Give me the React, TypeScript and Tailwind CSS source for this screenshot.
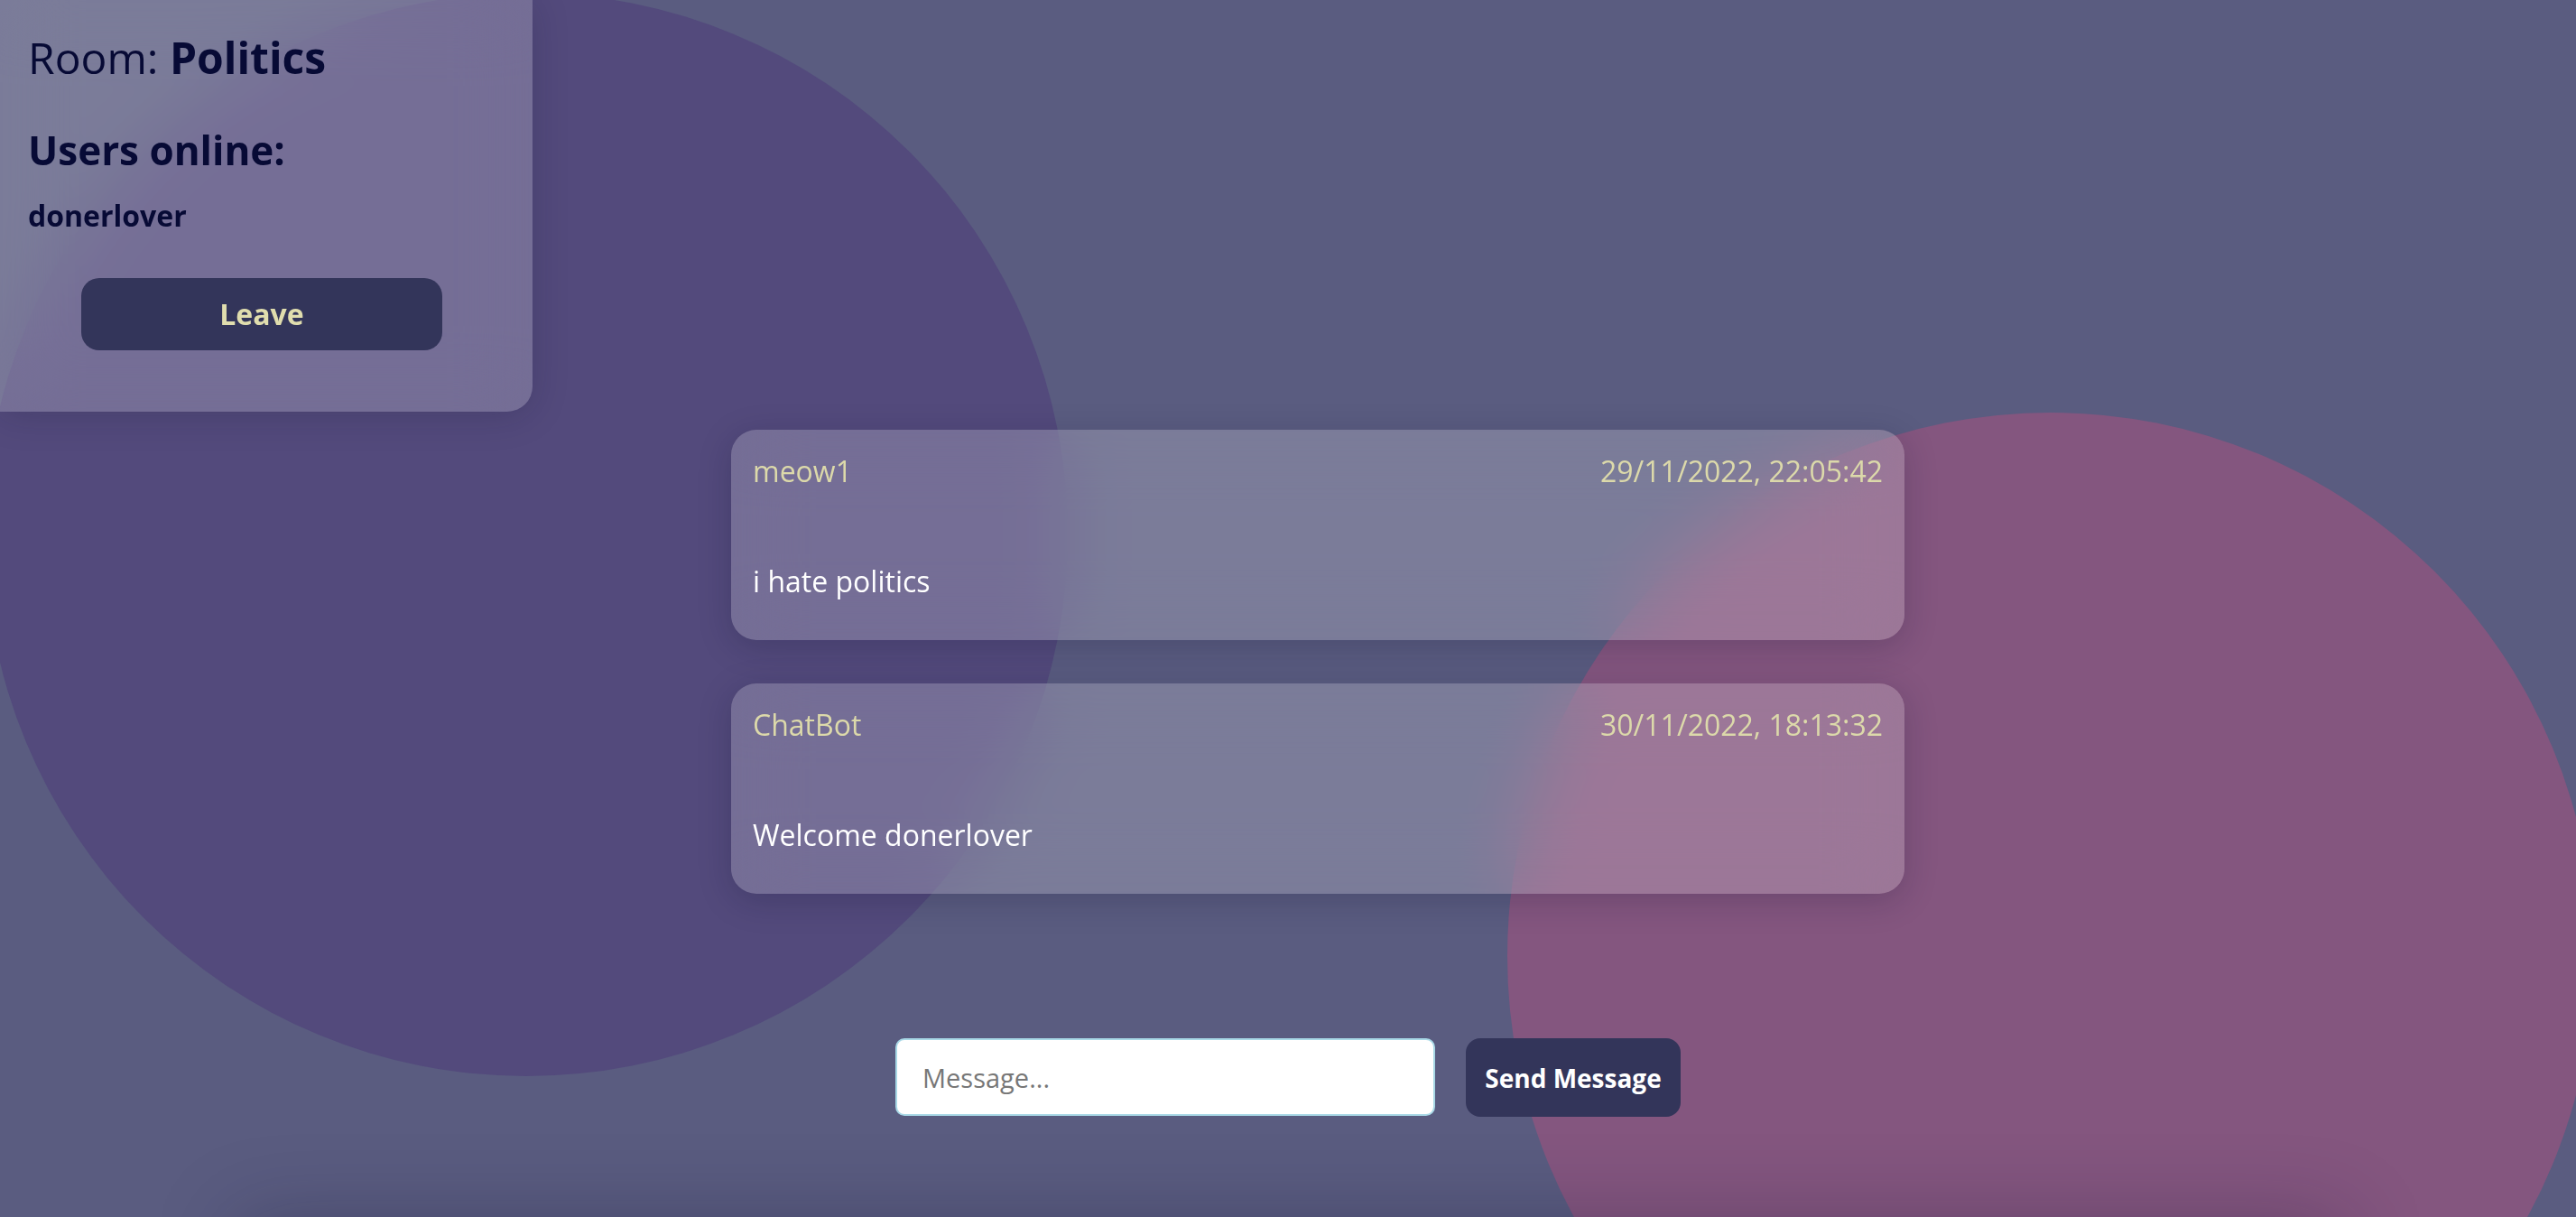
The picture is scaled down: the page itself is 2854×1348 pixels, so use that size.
export default function App() {
  const messages = [
    { user: "meow1", time: "29/11/2022, 22:05:42", text: "i hate politics" },
    { user: "ChatBot", time: "30/11/2022, 18:13:32", text: "Welcome donerlover" },
  ];

  return (
    <div
      className="relative h-[1348px] w-full overflow-hidden bg-[#5a5c80]"
      style={{ fontFamily: '"Open Sans", "Noto Sans", sans-serif' }}
    >
      {/* background blobs */}
      <div className="absolute left-[-17px] top-[-8px] h-[1200px] w-[1200px] rounded-full bg-[#534a7c]" />
      <div className="absolute left-[1670px] top-[457px] h-[1204px] w-[1204px] rounded-full bg-[#84567f]" />
      <div className="absolute left-[273px] top-[1360px] h-[200px] w-[2313px] shadow-[0_0_90px_10px_rgba(20,20,50,0.28)]" />

      {/* sidebar */}
      <aside className="absolute left-0 top-0 z-10 h-[456px] w-[590px] rounded-br-[28px] bg-white/20 pl-[31px] pt-[40px] text-[#070a35] shadow-[0_4px_40px_rgba(20,20,50,0.2)] backdrop-blur-2xl">
        <h1 className="text-[48px] leading-none">
          Room: <span className="font-bold">Politics</span>
        </h1>
        <h2 className="mt-[56px] text-[44px] font-bold leading-none">Users online:</h2>
        <p className="mt-[35px] text-[32px] font-bold leading-none">donerlover</p>
        <button className="ml-[59px] mt-[53px] flex h-[80px] w-[400px] items-center justify-center rounded-[20px] bg-[#33355a] text-[32px] font-bold text-[#e0ddae]">
          Leave
        </button>
      </aside>

      {/* chat */}
      <main className="relative z-0 flex flex-col pt-[476px]">
        <div className="ml-[810px] flex w-[1300px] flex-col gap-[48px]">
          {messages.map((m) => (
            <div
              key={m.time}
              className="h-[233px] rounded-[28px] bg-white/20 px-[24px] pt-[30px] shadow-[0_8px_36px_rgba(20,20,50,0.22)] backdrop-blur-2xl"
            >
              <div className="flex justify-between text-[32px] leading-none text-[#dcd9aa]">
                <span>{m.user}</span>
                <span>{m.time}</span>
              </div>
              <p className="mt-[90px] text-[32px] leading-none text-white">{m.text}</p>
            </div>
          ))}
        </div>

        <form className="mt-[160px] flex justify-center gap-[34px]">
          <input
            placeholder="Message..."
            className="h-[86px] w-[598px] rounded-[10px] border-2 border-[#a8d8e6] bg-white pl-[28px] text-[29px] text-[#222] outline-none placeholder:text-[#777]"
          />
          <button
            type="button"
            className="h-[87px] w-[238px] rounded-[16px] bg-[#33355a] text-[28px] font-bold text-white"
          >
            Send Message
          </button>
        </form>
      </main>
    </div>
  );
}
